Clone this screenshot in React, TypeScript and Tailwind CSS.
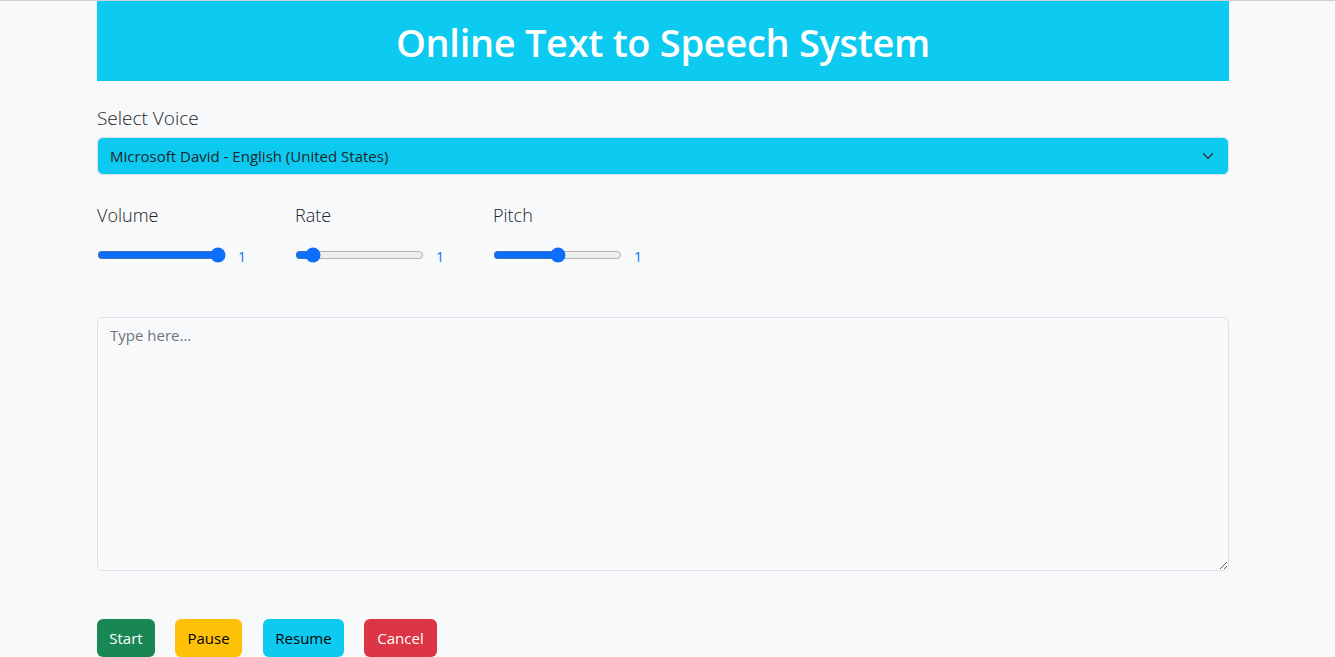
import { useState } from 'react'

const font = { fontFamily: '"Open Sans", "Noto Sans", sans-serif' }

function Slider({ label, min, max, step, value, onChange }: { label: string; min: number; max: number; step: number; value: number; onChange: (v: number) => void }) {
  return (
    <div className="w-[198px]">
      <label className="block text-[18px] font-light text-[#212529] leading-[24px]">{label}</label>
      <div className="mt-[15px] flex items-center">
        <input
          type="range"
          min={min}
          max={max}
          step={step}
          value={value}
          onChange={(e) => onChange(Number(e.target.value))}
          className="w-[129px] accent-[#0d6efd]"
        />
        <span className="ml-[12px] text-[14px] text-[#0d6efd] mt-[4px]">1</span>
      </div>
    </div>
  )
}

export default function App() {
  const [volume, setVolume] = useState(1)
  const [rate, setRate] = useState(1)
  const [pitch, setPitch] = useState(1)

  return (
    <div className="min-h-screen bg-[#f8f9fa] border-t border-[#d0d0d0]" style={font}>
      <div className="ml-[97px] w-[1132px]">
        {/* Header */}
        <header className="h-[80px] bg-[#0dcaf0] flex items-center justify-center">
          <h1 className="text-[38px] font-semibold text-white tracking-[-0.3px] pt-[3px]">Online Text to Speech System</h1>
        </header>

        {/* Voice */}
        <div className="mt-[25px]">
          <label className="block text-[19px] font-light text-[#212529] leading-[24px]">Select Voice</label>
          <div className="relative mt-[7px]">
            <select className="w-full h-[38px] appearance-none rounded-[6px] border border-[#dee2e6] bg-[#0dcaf0] pl-[12px] text-[15px] text-[#212529] outline-none">
              <option>Microsoft David - English (United States)</option>
            </select>
            <svg className="pointer-events-none absolute right-[14px] top-[13px]" width="14" height="12" viewBox="0 0 16 16" fill="none" stroke="#343a40" strokeWidth="2" strokeLinecap="round" strokeLinejoin="round">
              <path d="m2 5 6 6 6-6" />
            </svg>
          </div>
        </div>

        {/* Sliders */}
        <div className="mt-[28px] flex">
          <Slider label="Volume" min={0} max={1} step={0.1} value={volume} onChange={setVolume} />
          <Slider label="Rate" min={0.1} max={10} step={0.1} value={rate} onChange={setRate} />
          <Slider label="Pitch" min={0} max={2} step={0.1} value={pitch} onChange={setPitch} />
        </div>

        {/* Text */}
        <textarea
          placeholder="Type here..."
          className="mt-[50px] block w-full h-[254px] rounded-[6px] border border-[#dee2e6] bg-[#f8f9fa] px-[12px] py-[6px] text-[15px] text-[#212529] placeholder-[#6c757d] outline-none"
        />

        {/* Buttons */}
        <div className="mt-[48px] flex gap-[20px] text-[15px]">
          <button className="h-[38px] w-[58px] rounded-[6px] bg-[#198754] text-white">Start</button>
          <button className="h-[38px] w-[67px] rounded-[6px] bg-[#ffc107] text-black">Pause</button>
          <button className="ml-px h-[38px] w-[81px] rounded-[6px] bg-[#0dcaf0] text-black">Resume</button>
          <button className="h-[38px] w-[73px] rounded-[6px] bg-[#dc3545] text-white">Cancel</button>
        </div>
      </div>
    </div>
  )
}
